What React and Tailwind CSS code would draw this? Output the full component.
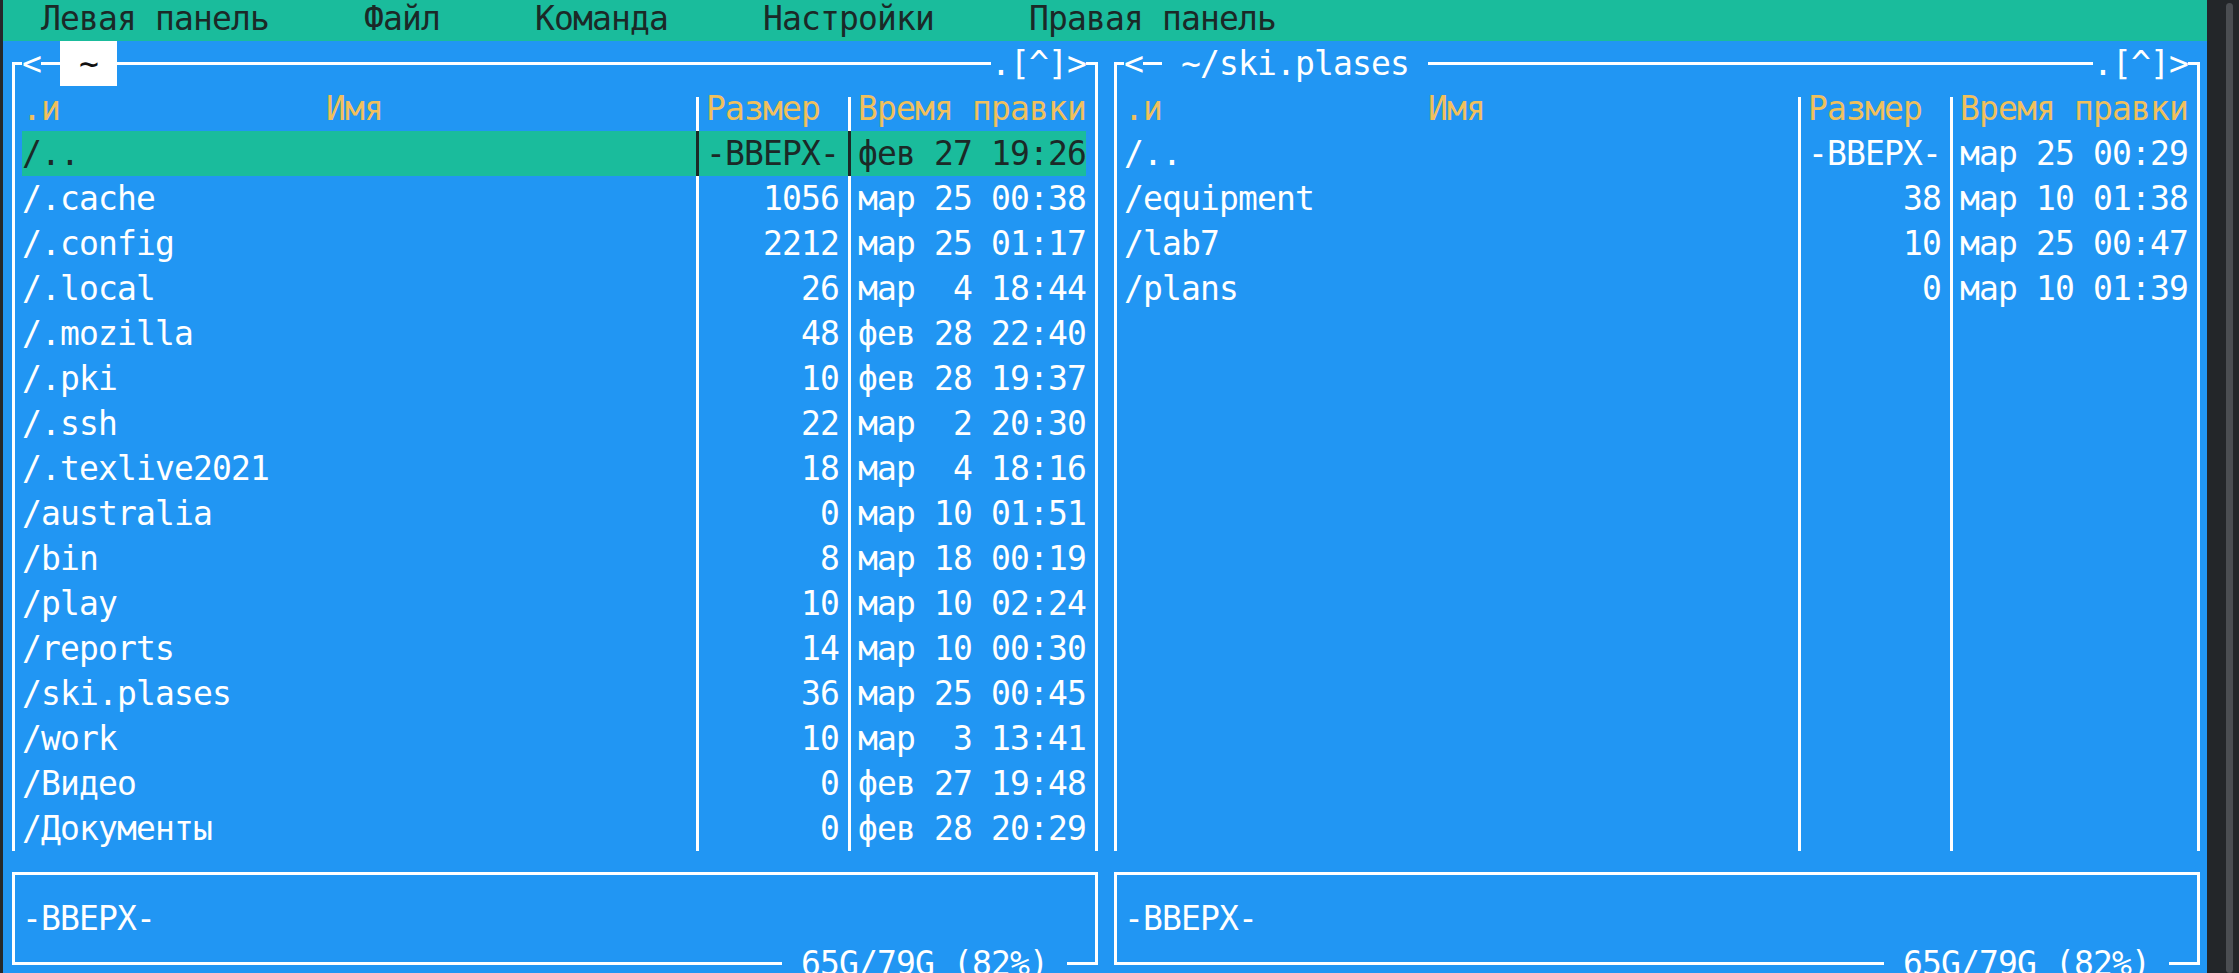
import React from "react";

const leftRows = [
  ["/..", "-ВВЕРХ-", "фев 27 19:26", true],
  ["/.cache", "1056", "мар 25 00:38"],
  ["/.config", "2212", "мар 25 01:17"],
  ["/.local", "26", "мар  4 18:44"],
  ["/.mozilla", "48", "фев 28 22:40"],
  ["/.pki", "10", "фев 28 19:37"],
  ["/.ssh", "22", "мар  2 20:30"],
  ["/.texlive2021", "18", "мар  4 18:16"],
  ["/australia", "0", "мар 10 01:51"],
  ["/bin", "8", "мар 18 00:19"],
  ["/play", "10", "мар 10 02:24"],
  ["/reports", "14", "мар 10 00:30"],
  ["/ski.plases", "36", "мар 25 00:45"],
  ["/work", "10", "мар  3 13:41"],
  ["/Видео", "0", "фев 27 19:48"],
  ["/Документы", "0", "фев 28 20:29"],
];

const rightRows = [
  ["/..", "-ВВЕРХ-", "мар 25 00:29"],
  ["/equipment", "38", "мар 10 01:38"],
  ["/lab7", "10", "мар 25 00:47"],
  ["/plans", "0", "мар 10 01:39"],
];

function Row({ children }) {
  return <div className="flex h-[45px] shrink-0">{children}</div>;
}

function V() {
  return (
    <div className="w-[19px] h-[45px] shrink-0">
      <div className="ml-[9px] w-[3px] h-full bg-white" />
    </div>
  );
}

function Sep({ dark }) {
  return (
    <div className="w-[19px] h-[45px] shrink-0">
      <div className={dark ? "ml-[9px] w-[3px] h-full bg-[#1b2927]" : "ml-[9px] w-[3px] h-full bg-white"} />
    </div>
  );
}

function SepTop() {
  return (
    <div className="w-[19px] h-[45px] shrink-0">
      <div className="ml-[9px] mt-[11px] w-[3px] h-[34px] bg-white" />
    </div>
  );
}

function HFill() {
  return (
    <div className="flex-1 h-[45px]">
      <div className="mt-[21px] h-[3px] bg-white" />
    </div>
  );
}

function HCell() {
  return (
    <div className="w-[19px] h-[45px] shrink-0">
      <div className="mt-[21px] h-[3px] bg-white" />
    </div>
  );
}

function TL() {
  return (
    <div className="w-[19px] h-[45px] shrink-0">
      <div className="ml-[9px] mt-[21px] w-[10px] h-[24px] border-l-[3px] border-t-[3px] border-white" />
    </div>
  );
}

function TR() {
  return (
    <div className="w-[19px] h-[45px] shrink-0">
      <div className="mt-[21px] w-[12px] h-[24px] border-r-[3px] border-t-[3px] border-white" />
    </div>
  );
}

function BL() {
  return (
    <div className="w-[19px] h-[45px] shrink-0">
      <div className="ml-[9px] w-[10px] h-[24px] border-l-[3px] border-b-[3px] border-white" />
    </div>
  );
}

function BR() {
  return (
    <div className="w-[19px] h-[45px] shrink-0">
      <div className="w-[12px] h-[24px] border-r-[3px] border-b-[3px] border-white" />
    </div>
  );
}

function LT() {
  return (
    <div className="w-[19px] h-[45px] shrink-0">
      <div className="ml-[9px] w-[10px] h-full border-l-[3px] border-white">
        <div className="mt-[21px] h-[3px] bg-white" />
      </div>
    </div>
  );
}

function RT() {
  return (
    <div className="w-[19px] h-[45px] shrink-0">
      <div className="w-[12px] h-full border-r-[3px] border-white">
        <div className="mt-[21px] h-[3px] bg-white" />
      </div>
    </div>
  );
}

function FileRow({ name, size, date, sel }) {
  return (
    <Row>
      <V />
      <div className={sel ? "flex w-[1064px] bg-[#1abc9c] text-[#1b2927]" : "flex w-[1064px] text-white"}>
        <div className="w-[665px] whitespace-pre overflow-hidden">{name}</div>
        <Sep dark={sel} />
        <div className="w-[133px] whitespace-pre text-right">{size}</div>
        <Sep dark={sel} />
        <div className="w-[228px] whitespace-pre">{date}</div>
      </div>
      <V />
    </Row>
  );
}

function Panel({ title, rows }) {
  const filled = [];
  for (let i = 0; i < 16; i++) {
    const r = rows[i];
    filled.push(
      r ? (
        <FileRow key={i} name={r[0]} size={r[1]} date={r[2]} sel={!!r[3]} />
      ) : (
        <FileRow key={i} name="" size="" date="" />
      )
    );
  }
  return (
    <div className="w-[1102px] shrink-0 flex flex-col text-white">
      <Row>
        <TL />
        <div className="w-[19px] shrink-0 whitespace-pre">{"<"}</div>
        <HCell />
        {title}
        <HFill />
        <div className="w-[95px] shrink-0 whitespace-pre">{".[^]>"}</div>
        <TR />
      </Row>
      <Row>
        <V />
        <div className="w-[665px] whitespace-pre text-[#f0c05c]">{".и              Имя"}</div>
        <SepTop />
        <div className="w-[133px] whitespace-pre text-[#f0c05c]">Размер</div>
        <SepTop />
        <div className="w-[228px] whitespace-pre text-[#f0c05c]">Время правки</div>
        <V />
      </Row>
      {filled}
      <Row>
        <LT />
        <HFill />
        <RT />
      </Row>
      <Row>
        <V />
        <div className="flex-1 whitespace-pre">-ВВЕРХ-</div>
        <V />
      </Row>
      <Row>
        <BL />
        <HFill />
        <div className="w-[285px] shrink-0 whitespace-pre">{" 65G/79G (82%) "}</div>
        <HCell />
        <BR />
      </Row>
    </div>
  );
}

export default function App() {
  return (
    <div className="flex h-[973px] w-[2239px] overflow-hidden bg-[#25282b] pl-[3px] font-['DejaVu_Sans_Mono',monospace] text-[33px] leading-[45px] tracking-[-0.868px]">
      <div className="w-[2204px] shrink-0 -mt-[4px] flex flex-col bg-[#2196f3]">
        <div className="h-[45px] shrink-0 bg-[#1abc9c] text-[#1b2927] whitespace-pre">
          {"  Левая панель     Файл     Команда     Настройки     Правая панель"}
        </div>
        <div className="flex">
          <Panel
            rows={leftRows}
            title={<div className="w-[57px] shrink-0 whitespace-pre bg-white text-[#111]">{" ~ "}</div>}
          />
          <Panel
            rows={rightRows}
            title={<div className="w-[266px] shrink-0 whitespace-pre">{" ~/ski.plases "}</div>}
          />
        </div>
      </div>
      <div className="w-[32px] shrink-0 h-full bg-[#232629] pt-[3px]">
        <div className="ml-[19px] w-[7px] h-full rounded-full bg-[#4b4e52]" />
      </div>
    </div>
  );
}
